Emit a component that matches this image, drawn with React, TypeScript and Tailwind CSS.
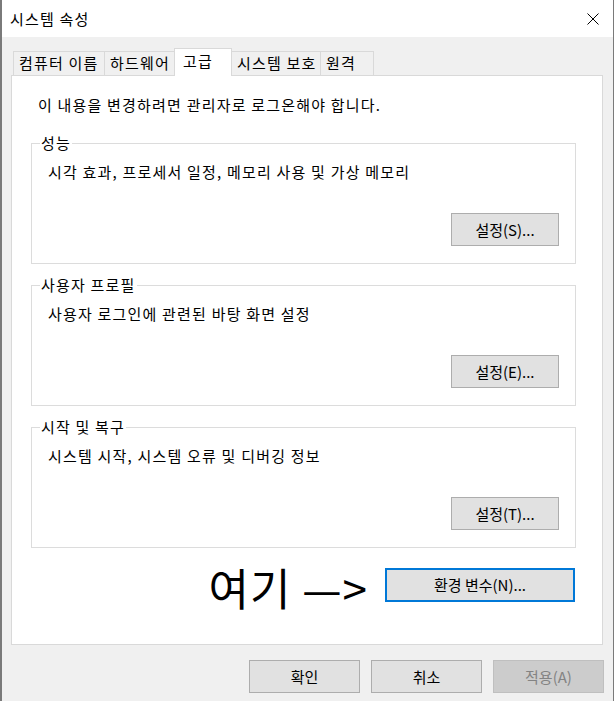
const tabs = [
  { label: "컴퓨터 이름", w: "w-[92px]" },
  { label: "하드웨어", w: "w-[71px]" },
  { label: "고급", w: "w-[58px]", active: true },
  { label: "시스템 보호", w: "w-[90px]" },
  { label: "원격", w: "w-[54px]" },
];

const groups = [
  { title: "성능", desc: "시각 효과, 프로세서 일정, 메모리 사용 및 가상 메모리", btn: "설정(S)..." },
  { title: "사용자 프로필", desc: "사용자 로그인에 관련된 바탕 화면 설정", btn: "설정(E)..." },
  { title: "시작 및 복구", desc: "시스템 시작, 시스템 오류 및 디버깅 정보", btn: "설정(T)..." },
];

function WinButton({ children, className = "" }: { children: React.ReactNode; className?: string }) {
  return (
    <button
      className={`h-[33px] flex items-center justify-center bg-[#e1e1e1] border border-[#adadad] text-[15px] leading-[20px] tracking-normal text-black ${className}`}
    >
      {children}
    </button>
  );
}

export default function App() {
  return (
    <div className="w-[614px] h-[701px] bg-[#f0f0f0] border-l-2 border-r border-[#7a7a7a] flex flex-col font-['Noto_Sans_CJK_KR',sans-serif] text-black text-[15px] leading-[20px] tracking-[1.2px] overflow-hidden">
      {/* title bar */}
      <div className="h-[37px] bg-white flex items-center justify-between pl-[8px] pr-[14px] shrink-0">
        <span className="text-[15px]">시스템 속성</span>
        <svg width="12" height="12" viewBox="0 0 12 12" className="mt-[1px]">
          <path d="M0.5 0.5 L11.5 11.5 M11.5 0.5 L0.5 11.5" stroke="#000" strokeWidth="1" />
        </svg>
      </div>

      <div className="pl-[9px] pr-[9px] flex flex-col">
        {/* tabs */}
        <div className="mt-[11px] h-[27px] flex items-end pl-[2px] relative z-10">
          {tabs.map((t) =>
            t.active ? (
              <div
                key={t.label}
                className={`${t.w} h-[28px] -mb-px -ml-px bg-white border-t border-l border-r border-[#d9d9d9] pl-[8px] pt-[2px]`}
              >
                {t.label}
              </div>
            ) : (
              <div
                key={t.label}
                className={`${t.w} h-[24px] -ml-px first:ml-0 bg-[#f0f0f0] border-t border-l border-r border-[#d9d9d9] pl-[5px] leading-[22px]`}
              >
                {t.label}
              </div>
            )
          )}
        </div>

        {/* panel */}
        <div className="w-[592px] h-[570px] bg-white border border-[#d9d9d9] pl-[19px] pt-[19px] flex flex-col">
          <div className="pl-[7px]">이 내용을 변경하려면 관리자로 로그온해야 합니다.</div>

          <div className="mt-[28px] w-[545px] flex flex-col gap-[21px]">
            {groups.map((g) => (
              <div
                key={g.title}
                className="relative h-[121px] border border-[#dcdcdc] pl-[16px] pr-[16px] pt-[18px] pb-[17px] flex flex-col"
              >
                <span className="absolute -top-[11px] left-[8px] bg-white px-[1px]">{g.title}</span>
                <div>{g.desc}</div>
                <div className="mt-auto flex justify-end">
                  <WinButton className="w-[108px]">{g.btn}</WinButton>
                </div>
              </div>
            ))}
          </div>

          <div className="w-[544px] h-[34px] mt-[20px] flex items-center justify-end">
            <span className="text-[44px] leading-[48px] mr-[17px] mt-[4px] tracking-[1px]">여기 —&gt;</span>
            <button className="w-[190px] h-[34px] flex items-center justify-center bg-[#e1e1e1] border-2 border-[#0078d7] text-[15px] leading-[20px] tracking-normal">
              환경 변수(N)...
            </button>
          </div>
        </div>

        {/* bottom buttons */}
        <div className="mt-[15px] flex justify-end gap-[11px]">
          <WinButton className="w-[111px]">확인</WinButton>
          <WinButton className="w-[111px]">취소</WinButton>
          <button className="w-[111px] h-[33px] flex items-center justify-center bg-[#cccccc] border border-[#bfbfbf] text-[15px] leading-[20px] tracking-normal text-[#838383]">
            적용(A)
          </button>
        </div>
      </div>
    </div>
  );
}
